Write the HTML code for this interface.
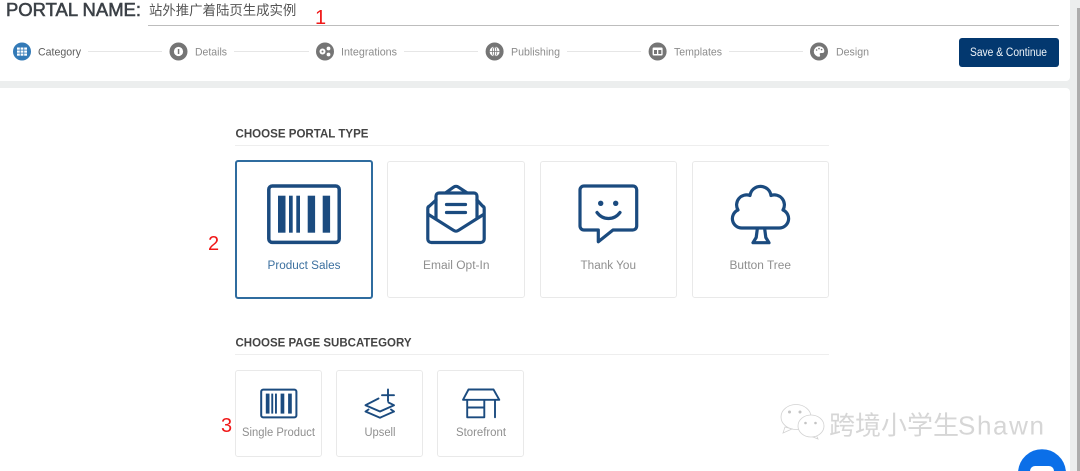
<!DOCTYPE html>
<html lang="en">
<head>
<meta charset="utf-8">
<title>Portal</title>
<style>
html,body{margin:0;padding:0;background:#eceeee;width:1080px;height:471px;overflow:hidden;}
body{position:relative;font-family:"Liberation Sans","Noto Sans CJK SC",sans-serif;}
.p{position:absolute;background:#fff;}
.card{position:absolute;box-sizing:border-box;background:#fff;border:1px solid #e9e9e9;border-radius:3px;}
.on{border:2px solid #2f6c9f;}
svg{position:absolute;left:0;top:0;display:block;}
text{font-family:"Liberation Sans","Noto Sans CJK SC",sans-serif;}
.st{font-size:11px;fill:#8c8c8c;}
.lb{font-size:11.5px;fill:#8f8f8f;}
.hd{font-size:11.5px;font-weight:bold;fill:#444;}
.ic{fill:none;stroke:#1b4b7f;stroke-linejoin:round;stroke-linecap:round;}
.num{font-size:20px;fill:#f01818;}
</style>
</head>
<body>
<div class="p" style="left:0;top:0;width:1070px;height:81px;border-radius:0 0 4px 0;"></div>
<div class="p" style="left:0;top:88px;width:1070px;height:383px;border-radius:0 4px 0 0;"></div>
<div style="position:absolute;left:1077px;top:8px;width:3px;height:463px;background:#adadad;"></div>
<div style="position:absolute;left:148px;top:24.5px;width:911px;height:1px;background:#bdbdbd;"></div>
<div style="position:absolute;left:959px;top:38px;width:100px;height:29px;background:#03386f;border-radius:3px;"></div>

<div class="card on" style="left:235px;top:160px;width:138px;height:139px;"></div>
<div class="card" style="left:387px;top:161px;width:138px;height:137px;"></div>
<div class="card" style="left:540px;top:161px;width:137px;height:137px;"></div>
<div class="card" style="left:692px;top:161px;width:137px;height:137px;"></div>
<div class="card" style="left:235px;top:370px;width:87px;height:87px;"></div>
<div class="card" style="left:336px;top:370px;width:87px;height:87px;"></div>
<div class="card" style="left:437px;top:370px;width:87px;height:87px;"></div>

<svg width="1080" height="471" viewBox="0 0 1080 471" xmlns="http://www.w3.org/2000/svg">
<!-- header -->
<text x="6" y="16" font-size="18" fill="#3b4046" stroke="#3b4046" stroke-width=".55" textLength="135" lengthAdjust="spacingAndGlyphs">PORTAL NAME:</text>
<text x="149" y="15" font-size="13.4" fill="#555">站外推广着陆页生成实例</text>
<text x="315" y="24" class="num">1</text>

<!-- step lines -->
<g stroke="#e6e6e6" stroke-width="1">
<path d="M88 51.5H162M234 51.5H309M404 51.5H478M567 51.5H641M729 51.5H803"/>
</g>
<!-- step icons -->
<circle cx="22" cy="51.5" r="9" fill="#337ab7"/>
<g fill="#fff"><rect x="17" y="47.5" width="2.8" height="2.2"/><rect x="20.6" y="47.5" width="2.8" height="2.2"/><rect x="24.2" y="47.5" width="2.8" height="2.2"/><rect x="17" y="50.5" width="2.8" height="2.2"/><rect x="20.6" y="50.5" width="2.8" height="2.2"/><rect x="24.2" y="50.5" width="2.8" height="2.2"/><rect x="17" y="53.5" width="2.8" height="2.2"/><rect x="20.6" y="53.5" width="2.8" height="2.2"/><rect x="24.2" y="53.5" width="2.8" height="2.2"/></g>
<circle cx="178.5" cy="51.5" r="9" fill="#757575"/>
<circle cx="178.5" cy="51.5" r="4.6" fill="#fff"/><rect x="177.8" y="49" width="1.5" height="5" fill="#757575"/>
<circle cx="325" cy="51.5" r="9" fill="#757575"/>
<g fill="#fff"><circle cx="322.5" cy="51.5" r="3"/><circle cx="328.5" cy="48.5" r="1.9"/><circle cx="328.5" cy="54.5" r="1.9"/></g><circle cx="322.5" cy="51.5" r="1" fill="#757575"/>
<circle cx="494.6" cy="51.5" r="9" fill="#757575"/>
<circle cx="494.6" cy="51.5" r="5" fill="#fff"/>
<path d="M489.6 51.5h10M494.6 46.5v10" stroke="#757575" stroke-width=".8"/>
<ellipse cx="494.6" cy="51.5" rx="2.3" ry="5" fill="none" stroke="#757575" stroke-width=".7"/>
<circle cx="657.6" cy="51.5" r="9" fill="#757575"/>
<rect x="652.6" y="47.5" width="10" height="8" rx="1" fill="#fff"/><rect x="654" y="50" width="3" height="4" fill="#757575"/><rect x="658.3" y="50" width="3" height="4" fill="#757575"/>
<circle cx="819" cy="51.5" r="9" fill="#757575"/>
<path d="M819 46.3a5.2 5.2 0 1 0 0 10.4c1.5 0 1.2-1.4.8-2.1-.4-1 .3-1.6 1.2-1.6h1.5c1.2 0 1.8-.9 1.8-2 0-2.7-2.4-4.7-5.3-4.7z" fill="#fff"/>
<g fill="#757575"><circle cx="816.6" cy="50" r=".8"/><circle cx="819" cy="48.6" r=".8"/><circle cx="821.6" cy="49.6" r=".8"/></g>
<!-- step labels -->
<text x="38" y="55.5" class="st" style="fill:#5c5c5c" textLength="43" lengthAdjust="spacingAndGlyphs">Category</text>
<text x="195" y="55.5" class="st" textLength="32" lengthAdjust="spacingAndGlyphs">Details</text>
<text x="341" y="55.5" class="st" textLength="56" lengthAdjust="spacingAndGlyphs">Integrations</text>
<text x="511" y="55.5" class="st" textLength="49" lengthAdjust="spacingAndGlyphs">Publishing</text>
<text x="674" y="55.5" class="st" textLength="48" lengthAdjust="spacingAndGlyphs">Templates</text>
<text x="836" y="55.5" class="st" textLength="33" lengthAdjust="spacingAndGlyphs">Design</text>
<text x="970" y="56" font-size="11.5" fill="#eef3f8" textLength="77" lengthAdjust="spacingAndGlyphs">Save &amp; Continue</text>

<!-- headings -->
<text x="235.5" y="137.5" class="hd" textLength="133" lengthAdjust="spacingAndGlyphs">CHOOSE PORTAL TYPE</text>
<path d="M235 145.5H829M235 354.5H829" stroke="#eeeeee" stroke-width="1"/>
<text x="235.5" y="346.5" class="hd" textLength="176" lengthAdjust="spacingAndGlyphs">CHOOSE PAGE SUBCATEGORY</text>

<!-- barcode -->
<rect x="268.8" y="186" width="70.4" height="56.4" rx="3.5" class="ic" stroke-width="3.5"/>
<g fill="#1b4b7f"><rect x="278" y="195.7" width="7.5" height="37"/><rect x="289" y="195.7" width="3.7" height="37"/><rect x="296.3" y="195.7" width="3.7" height="37"/><rect x="307.7" y="195.7" width="7.4" height="37"/><rect x="322.7" y="195.7" width="7.4" height="37"/></g>
<!-- envelope -->
<g class="ic" stroke-width="3.2">
<path d="M436 218V196a3 3 0 0 1 3-3H474a3 3 0 0 1 3 3V218"/>
<path d="M446 192.5L453.5 187.2a4 4 0 0 1 5 0L466.5 192.5"/>
<path d="M436 200L429.5 206a3 3 0 0 0-1.7 3V239a3.5 3.5 0 0 0 3.5 3.5H480.7a3.5 3.5 0 0 0 3.5-3.5V209a3 3 0 0 0-1.7-3L477 200"/>
<path d="M428.5 214.5L453.5 230.3a4 4 0 0 0 5 0L483.5 214.5"/>
<path d="M446.5 204.5H465.5M446.5 212.5H465.5"/>
</g>
<!-- chat -->
<g class="ic" stroke-width="3.2">
<path d="M584 186H633a3.7 3.7 0 0 1 3.7 3.7V226a4 4 0 0 1-4 4H613L598.3 241.7V230H584a4 4 0 0 1-4-4V190a4 4 0 0 1 4-4z"/>
<path d="M597 212.5C603 220.5 614 220.5 620 212.5"/>
</g>
<circle cx="600.7" cy="203.3" r="2.7" fill="#1b4b7f"/><circle cx="615.7" cy="203.3" r="2.7" fill="#1b4b7f"/>
<!-- tree -->
<g class="ic" stroke-width="3.2">
<path d="M742 228a9.4 9.4 0 0 1-4-18a10 10 0 0 1 12-14.5a10.6 10.6 0 0 1 21 0a10 10 0 0 1 12 14.5a9.4 9.4 0 0 1-4 18z"/>
<path d="M757.3 229L756.2 237.5L753 242.7H769L765.8 237.5L764.7 229"/>
</g>
<text x="267.5" y="269" class="lb" style="fill:#3c709f" textLength="73" lengthAdjust="spacingAndGlyphs">Product Sales</text>
<text x="423" y="269" class="lb" textLength="66.5" lengthAdjust="spacingAndGlyphs">Email Opt-In</text>
<text x="580.5" y="269" class="lb" textLength="55.5" lengthAdjust="spacingAndGlyphs">Thank You</text>
<text x="729.5" y="269" class="lb" textLength="61.5" lengthAdjust="spacingAndGlyphs">Button Tree</text>

<!-- small barcode -->
<rect x="261.2" y="389.6" width="35.2" height="27.8" rx="2" class="ic" stroke-width="2"/>
<g fill="#1b4b7f"><rect x="265.8" y="393.6" width="3.7" height="20"/><rect x="271.3" y="393.6" width="1.9" height="20"/><rect x="275" y="393.6" width="1.9" height="20"/><rect x="280.6" y="393.6" width="3.7" height="20"/><rect x="288.1" y="393.6" width="3.7" height="20"/></g>
<!-- upsell -->
<g class="ic" stroke-width="1.9">
<path d="M388 389.5V401M382 395.2H394"/>
<path d="M378.5 398.5L365.5 405.2L380 411.5L394 405.2L388.5 402.5"/>
<path d="M368.5 409.5L365.5 411.5L380 417.7L394 411.5L391 409.5"/>
</g>
<!-- storefront -->
<g class="ic" stroke-width="1.9">
<path d="M468.5 389.5H493.5L499.3 399.8H463z"/>
<path d="M467.2 400V417.3H484.3V400M467.2 407.5H484.3M495 400V417.3"/>
</g>
<text x="242" y="436" class="lb" textLength="73" lengthAdjust="spacingAndGlyphs">Single Product</text>
<text x="364.5" y="436" class="lb" textLength="31" lengthAdjust="spacingAndGlyphs">Upsell</text>
<text x="456" y="436" class="lb" textLength="50" lengthAdjust="spacingAndGlyphs">Storefront</text>

<text x="208" y="250" class="num">2</text>
<text x="221" y="432" class="num">3</text>

<!-- watermark -->
<g fill="#fff" stroke="#d2d2d2" stroke-width=".8">
<ellipse cx="796" cy="417" rx="15" ry="12.5"/>
<path d="M785 427L783 433L792 429z"/>
<path d="M808 435L818 439L815 432z"/>
<ellipse cx="811" cy="426" rx="13" ry="11"/>
</g>
<g fill="#c4c4c4"><circle cx="789.5" cy="412" r="1.5"/><circle cx="800" cy="412" r="1.5"/><circle cx="805.5" cy="423" r="1.3"/><circle cx="815.5" cy="423" r="1.3"/></g>
<text x="829" y="434.5" font-size="26" fill="#d6d6d6">跨境小学生</text>
<text x="958" y="434.5" font-size="26" fill="#d6d6d6" textLength="86">Shawn</text>

<!-- chat bubble -->
<path d="M1018.1 471A24 24 0 0 1 1065.9 471z" fill="#0b6fe8"/>
<path d="M1030 471A5 5 0 0 1 1035 466H1049A5 5 0 0 1 1054 471z" fill="#fff"/>
</svg>
</body>
</html>
